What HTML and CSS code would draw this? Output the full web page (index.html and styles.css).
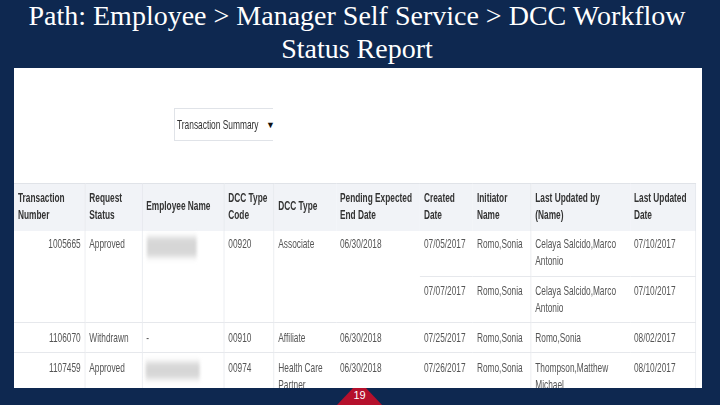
FILE: index.html
```html
<!DOCTYPE html>
<html lang="en">
<head>
<meta charset="utf-8">
<title>DCC Workflow Status Report</title>
<link rel="stylesheet" href="styles.css">
</head>
<body>
<div class="slide">
  <h1 class="title">Path: Employee &gt; Manager Self Service &gt; DCC Workflow Status Report</h1>
  <main class="panel">
    <div class="dropdown"><span class="drop-label">Transaction Summary</span><span class="caret">▼</span></div>
    <table class="report">
      <colgroup>
        <col class="c1"><col class="c2"><col class="c3"><col class="c4"><col class="c5">
        <col class="c6"><col class="c7"><col class="c8"><col class="c9"><col class="c10">
      </colgroup>
      <thead>
        <tr class="head">
          <th class="line">Transaction Number</th>
          <th class="line">Request Status</th>
          <th class="line">Employee Name</th>
          <th class="line">DCC Type Code</th>
          <th>DCC Type</th>
          <th>Pending Expected End Date</th>
          <th>Created Date</th>
          <th class="line">Initiator Name</th>
          <th>Last Updated by (Name)</th>
          <th>Last Updated Date</th>
        </tr>
      </thead>
      <tbody>
        <tr class="r-tall r-first">
          <td class="line num" rowspan="2">1005665</td>
          <td class="line" rowspan="2">Approved</td>
          <td class="line" rowspan="2"><div class="smudge wide"></div></td>
          <td class="line" rowspan="2">00920</td>
          <td rowspan="2">Associate</td>
          <td rowspan="2">06/30/2018</td>
          <td>07/05/2017</td>
          <td class="line">Romo,Sonia</td>
          <td>Celaya Salcido,Marco Antonio</td>
          <td>07/10/2017</td>
        </tr>
        <tr class="r-tall">
          <td>07/07/2017</td>
          <td class="line">Romo,Sonia</td>
          <td>Celaya Salcido,Marco Antonio</td>
          <td>07/10/2017</td>
        </tr>
        <tr class="r-short">
          <td class="line num">1106070</td>
          <td class="line">Withdrawn</td>
          <td class="line">-</td>
          <td class="line">00910</td>
          <td>Affiliate</td>
          <td>06/30/2018</td>
          <td>07/25/2017</td>
          <td class="line">Romo,Sonia</td>
          <td>Romo,Sonia</td>
          <td>08/02/2017</td>
        </tr>
        <tr class="r-tall r-last">
          <td class="line num">1107459</td>
          <td class="line">Approved</td>
          <td class="line"><div class="smudge low"></div></td>
          <td class="line">00974</td>
          <td>Health Care Partner</td>
          <td>06/30/2018</td>
          <td>07/26/2017</td>
          <td class="line">Romo,Sonia</td>
          <td>Thompson,Matthew Michael</td>
          <td>08/10/2017</td>
        </tr>
      </tbody>
    </table>
  </main>
  <div class="page-tab"><span>19</span></div>
</div>
</body>
</html>
```

FILE: styles.css
```css
:root {
  --k: 0.615;
}

html, body {
  margin: 0;
  padding: 0;
}

body {
  width: 720px;
  height: 405px;
  overflow: hidden;
  background: #0e2850;
}

.slide {
  position: relative;
  width: 720px;
  height: 405px;
  display: flex;
  flex-direction: column;
}

.title {
  margin: -1px 0 1px;
  height: 68px;
  padding: 0 20px 0 14px;
  box-sizing: border-box;
  text-align: center;
  font-family: "Liberation Serif", serif;
  font-weight: 400;
  font-size: 28px;
  line-height: 33px;
  color: #fff;
}

.panel {
  margin: 0 18px 0 14px;
  height: 320px;
  background: #fff;
  overflow: hidden;
  padding-top: 40px;
  box-sizing: border-box;
}

.dropdown {
  margin-left: 160px;
  width: 99px;
  height: 33px;
  box-sizing: border-box;
  border: 1px solid #e0e3e8;
  border-right: 0;
  display: flex;
  align-items: center;
  gap: 8px;
  padding-left: 2px;
  font-family: "Liberation Sans", sans-serif;
  font-size: 13.5px;
  color: #333;
}

.drop-label {
  width: 81px;
  white-space: nowrap;
  transform: scaleX(0.62);
  transform-origin: left center;
}

.caret {
  font-size: 9px;
  color: #111;
}

.report {
  margin-top: 42px;
  width: calc(682px / var(--k));
  transform: scaleX(var(--k));
  transform-origin: left top;
  table-layout: fixed;
  border-collapse: collapse;
  font-family: "Liberation Sans", sans-serif;
  font-size: 13.5px;
  line-height: 17px;
  color: #555;
}

.c1 { width: calc(71px / var(--k)); }
.c2 { width: calc(57px / var(--k)); }
.c3 { width: calc(82px / var(--k)); }
.c4 { width: calc(50px / var(--k)); }
.c5 { width: calc(62px / var(--k)); }
.c6 { width: calc(84px / var(--k)); }
.c7 { width: calc(53px / var(--k)); }
.c8 { width: calc(58px / var(--k)); }
.c9 { width: calc(99px / var(--k)); }
.c10 { width: calc(66px / var(--k)); }

.head {
  height: 47px;
  background: #f1f3f7;
}

.report th {
  padding: 0 calc(4px / var(--k)) 3px;
  text-align: left;
  font-weight: 700;
  color: #333;
  vertical-align: middle;
  border-top: 1px solid #e0e3e8;
}

.report td {
  padding: 5px calc(4px / var(--k)) 0;
  vertical-align: top;
  border-bottom: 1px solid #e6e8ec;
}

.report th:last-child,
.report td:last-child {
  border-right: 1px solid #e0e3e8;
}

.report .line {
  border-right: 1px solid #e0e3e8;
}

.report .num {
  text-align: right;
}

.r-tall {
  height: 46px;
}

.r-short {
  height: 30px;
}

.report .r-first td {
  padding-top: 4px;
}

.report .r-short td {
  padding-top: 6px;
}

.report .r-last td {
  padding-top: 6px;
}

.smudge {
  background: #d6d6d6;
  filter: blur(3px);
}

.smudge.wide {
  width: calc(50px / var(--k));
  height: 20px;
  margin: 2px 0 0 1px;
}

.smudge.low {
  width: calc(54px / var(--k));
  height: 17px;
  margin: 3px 0 0 -1px;
}

.page-tab {
  position: absolute;
  left: 337px;
  bottom: 0;
  width: 45px;
  height: 17px;
  background: #b5102c;
  clip-path: polygon(16px 0, 29px 0, 100% 100%, 0 100%);
  display: flex;
  justify-content: center;
  font-family: "Liberation Sans", sans-serif;
  font-size: 11px;
  line-height: 14px;
  color: #fff;
}
```
